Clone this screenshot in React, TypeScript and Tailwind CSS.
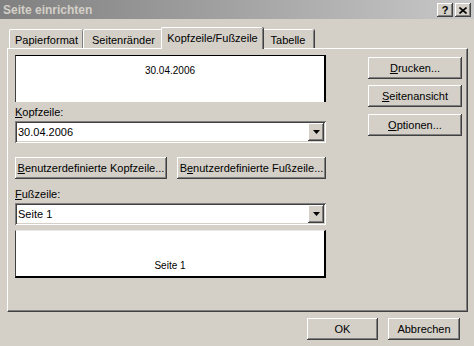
const raised =
  "bg-[#d4d0c8] shadow-[inset_-1px_-1px_#404040,inset_1px_1px_#ffffff,inset_-2px_-2px_#808080,inset_2px_2px_#d4d0c8]";
const sunken =
  "bg-white shadow-[inset_1px_1px_#808080,inset_-1px_-1px_#ffffff,inset_2px_2px_#404040,inset_-2px_-2px_#d4d0c8]";

function Button({ children, className = "" }: { children: React.ReactNode; className?: string }) {
  return (
    <div className={`flex h-[22px] items-center justify-center text-black ${raised} ${className}`}>{children}</div>
  );
}

function Combo({ value }: { value: string }) {
  return (
    <div className={`flex h-[22px] items-center pl-[3px] pr-[2px] ${sunken}`}>
      <span className="flex-1">{value}</span>
      <div className={`flex h-[18px] w-[16px] items-center justify-center ${raised}`}>
        <svg width="7" height="4" viewBox="0 0 7 4">
          <path d="M0 0h7L3.5 4z" fill="#000" />
        </svg>
      </div>
    </div>
  );
}

function Tab({ label, active = false, className = "" }: { label: string; active?: boolean; className?: string }) {
  if (active) {
    return (
      <div
        className={`relative z-10 -mx-[2px] -mb-px flex h-[22px] items-start justify-center rounded-t-[2px] border-l border-t border-l-white border-t-white bg-[#d4d0c8] pt-[4px] shadow-[inset_-1px_0_#808080,1px_0_#404040] ${className}`}
      >
        {label}
      </div>
    );
  }
  return (
    <div
      className={`flex h-[19px] items-start justify-center rounded-t-[2px] border-l border-t border-l-white border-t-white pt-[4px] shadow-[inset_-1px_0_#808080,1px_0_#404040] ${className}`}
    >
      {label}
    </div>
  );
}

export default function App() {
  return (
    <div
      className="flex h-[346px] w-[474px] flex-col bg-[#d4d0c8] text-[11px] leading-[13px] text-black"
      style={{ fontFamily: '"Liberation Sans", Arial, sans-serif' }}
    >
      <div className="flex h-[19px] items-center justify-between bg-gradient-to-r from-[#808080] to-[#c8c8c8] pl-[3px] pr-[3px] pt-[1px]">
        <span className="text-[12px] font-bold text-[#d4d0c8]">Seite einrichten</span>
        <div className="flex gap-[2px]">
          <div className={`flex h-[14px] w-[16px] items-center justify-center text-[11px] font-bold ${raised}`}>?</div>
          <div className={`flex h-[14px] w-[16px] items-center justify-center ${raised}`}>
            <svg width="8" height="7" viewBox="0 0 8 7">
              <path d="M0.5 0.5l7 6M7.5 0.5l-7 6" stroke="#000" strokeWidth="1.6" />
            </svg>
          </div>
        </div>
      </div>

      <div className="flex flex-col px-[7px] pt-[8px]">
        <div className="flex h-[21px] items-end pl-[2px]">
          <Tab label="Papierformat" className="w-[74px]" />
          <Tab label="Seitenränder" className="w-[80px]" />
          <Tab label="Kopfzeile/Fußzeile" active className="w-[102px]" />
          <Tab label="Tabelle" className="w-[53px]" />
        </div>

        <div className="flex h-[264px] w-[461px] border border-b-[#404040] border-l-white border-r-[#404040] border-t-white shadow-[inset_-1px_-1px_#808080]">
          <div className="flex w-[318px] flex-col pl-[7px] pt-[6px]">
            <div className="flex h-[47px] justify-center border-l border-r-2 border-t border-l-[#404040] border-r-black border-t-black bg-white pt-[8px] text-[10px]">
              30.04.2006
            </div>
            <div className="mt-[4px] h-[13px]">
              <span className="underline">K</span>opfzeile:
            </div>
            <div className="mt-[2px]">
              <Combo value="30.04.2006" />
            </div>
            <div className="mt-[14px] flex gap-[10px]">
              <Button className="w-[152px]">
                <span className="underline">B</span>enutzerdefinierte Kopfzeile...
              </Button>
              <Button className="w-[149px]">
                B<span className="underline">e</span>nutzerdefinierte Fußzeile...
              </Button>
            </div>
            <div className="mt-[9px] h-[13px]">
              <span className="underline">F</span>ußzeile:
            </div>
            <div className="mt-[2px]">
              <Combo value="Seite 1" />
            </div>
            <div className="mt-[5px] flex h-[48px] items-end justify-center border-b-2 border-l border-r-2 border-t border-b-black border-l-[#404040] border-r-black border-t-[#e8e8e8] bg-white pb-[4px] text-[10px]">
              Seite 1
            </div>
          </div>

          <div className="ml-auto flex flex-col gap-[6px] pr-[5px] pt-[8px]">
            <Button className="w-[94px]">
              <span className="underline">D</span>rucken...
            </Button>
            <Button className="w-[94px]">
              <span className="underline">S</span>eitenansicht
            </Button>
            <Button className="mt-[1px] w-[94px]">
              <span className="underline">O</span>ptionen...
            </Button>
          </div>
        </div>
      </div>

      <div className="mt-[6px] flex justify-end gap-[10px] pr-[14px]">
        <Button className="w-[71px]">OK</Button>
        <Button className="w-[72px]">Abbrechen</Button>
      </div>
    </div>
  );
}
